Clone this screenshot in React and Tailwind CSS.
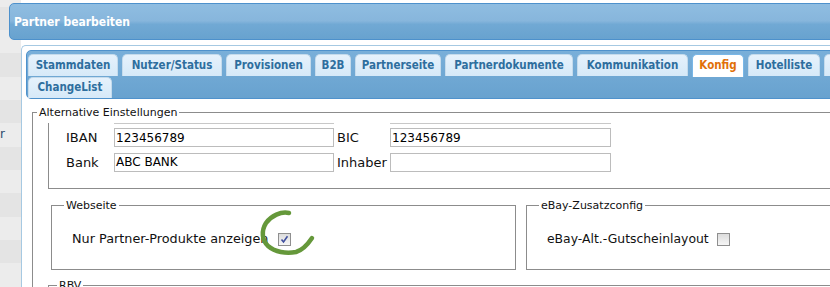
import React from "react";

const tabs = [
  { label: "Stammdaten", w: "w-[90px]" },
  { label: "Nutzer/Status", w: "w-[100px]" },
  { label: "Provisionen", w: "w-[85px]" },
  { label: "B2B", w: "w-[36px]" },
  { label: "Partnerseite", w: "w-[86px]" },
  { label: "Partnerdokumente", w: "w-[128px]" },
  { label: "Kommunikation", w: "w-[111px]" },
  { label: "Konfig", w: "w-[52px]", active: true },
  { label: "Hotelliste", w: "w-[72px]" },
  { label: "Bilder", w: "w-[70px]" },
];

const stripes = [7, 23, 23, 24, 23, 23, 24, 23, 23, 24, 23, 23, 24];

const Tab = ({ label, w, active }) => (
  <div
    className={
      active
        ? `${w} h-[23px] shrink-0 flex items-center justify-center rounded-t-[5px] border border-b-0 border-[#79b7e7] bg-white text-[#e17009]`
        : `${w} h-[22px] shrink-0 flex items-center justify-center rounded-t-[5px] border border-b-0 border-[#c5dbec] bg-[linear-gradient(#e6f2fc,#d6e9f8)] text-[#2e6e9e]`
    }
  >
    {label}
  </div>
);

const Checkbox = ({ checked }) => (
  <div className="w-[13px] h-[13px] shrink-0 border border-[#8f8f8f] bg-[linear-gradient(#dcdcdc,#f6f6f6)] flex items-center justify-center">
    {checked && (
      <svg width="9" height="9" viewBox="0 0 9 9">
        <path d="M1.5 4.5 L3.5 7 L7.5 1.2" fill="none" stroke="#3f4f9e" strokeWidth="1.6" />
      </svg>
    )}
  </div>
);

const Input = ({ value }) => (
  <div className="h-[19px] border border-[#bcbcbc] bg-white pl-px flex items-center text-[12px] text-black">
    {value}
  </div>
);

export default function App() {
  return (
    <div className="relative w-[830px] h-[287px] overflow-hidden bg-white font-['DejaVu_Sans',sans-serif]">
      {/* background behind the dialog */}
      <div className="w-[21px] flex flex-col">
        {stripes.map((h, i) => (
          <div
            key={i}
            className={`${i % 2 ? "bg-[#e4e4e4]" : "bg-[#ececec]"} ${h === 7 ? "h-[7px]" : h === 24 ? "h-[24px]" : "h-[23px]"} text-[12px] leading-[23px] text-[#2d4b6c] overflow-hidden`}
          >
            {i === 6 ? "r" : ""}
          </div>
        ))}
      </div>

      {/* dialog window */}
      <div className="absolute left-[9px] top-[3px] w-[900px]">
        <div className="h-[37px] rounded-[5px] border border-[#4d91cc] bg-[linear-gradient(#8fbde1_0%,#87b6dc_48%,#71a9d4_58%,#68a2cf_100%)] pl-[4px] flex items-center text-white font-bold text-[12px] font-stretch-condensed font-['DejaVu_Sans_Condensed','DejaVu_Sans',sans-serif]">
          Partner bearbeiten
        </div>

        <div className="ml-[12px] bg-white pt-[5px]">
          <div className="h-[260px] rounded-tl-[5px] border-l border-t border-[#a6c9e2] p-[4px] pr-0">
            {/* tab bar */}
            <div className="rounded-[5px] border border-[#4f92cc] bg-[linear-gradient(#79afd9,#68a2cf)] pl-[1px] pt-[3px] text-[11.5px] font-bold font-stretch-condensed font-['DejaVu_Sans_Condensed','DejaVu_Sans',sans-serif]">
              <div className="flex items-start gap-[4px] h-[23px]">
                {tabs.map((t) => (
                  <Tab key={t.label} {...t} />
                ))}
              </div>
              <div className="flex">
                <div className="w-[84px] h-[21px] flex items-center justify-center rounded-t-[5px] border border-b-0 border-[#c5dbec] bg-[linear-gradient(#e6f2fc,#d6e9f8)] text-[#2e6e9e]">
                  ChangeList
                </div>
              </div>
            </div>

            {/* Alternative Einstellungen */}
            <fieldset className="ml-[6px] mt-[7px] w-[900px] h-[300px] border border-[#8c8c8c] pl-[4px]">
              <legend className="px-[2px] text-[11px] leading-[13px] text-[#111]">Alternative Einstellungen</legend>

              <div className="ml-[11px] mt-[4px] border-l border-b border-[#8c8c8c] pl-[17px] pb-[16px]">
                <div className="grid grid-cols-[48px_220px_56px_221px]">
                  <div />
                  <div className="h-px bg-[#c8c8c8]" />
                  <div />
                  <div className="h-px bg-[#c8c8c8]" />
                </div>
                <div className="mt-[4px] grid grid-cols-[48px_220px_56px_221px] gap-y-[5px] items-center text-[13px] text-[#111]">
                  <div>IBAN</div>
                  <Input value="123456789" />
                  <div className="pl-[3px]">BIC</div>
                  <Input value="123456789" />
                  <div>Bank</div>
                  <Input value="ABC BANK" />
                  <div className="pl-[3px]">Inhaber</div>
                  <Input value="" />
                </div>
              </div>

              <div className="flex mt-[10px]">
                <fieldset className="ml-[14px] w-[465px] border border-[#8c8c8c] pl-[12px] pb-[22px]">
                  <legend className="px-[2px] text-[11px] leading-[13px] text-[#111]">Webseite</legend>
                  <div className="ml-[8px] mt-[19px] flex items-center gap-[10px] text-[12.8px] leading-[16px] text-[#111]">
                    <span>Nur Partner-Produkte anzeigen</span>
                    <Checkbox checked />
                  </div>
                </fieldset>
                <fieldset className="ml-[10px] w-[400px] border border-[#8c8c8c] pl-[12px] pb-[22px]">
                  <legend className="px-[2px] text-[11px] leading-[13px] text-[#111]">eBay-Zusatzconfig</legend>
                  <div className="ml-[8px] mt-[19px] flex items-center gap-[8px] text-[12.4px] leading-[16px] text-[#111]">
                    <span>eBay-Alt.-Gutscheinlayout</span>
                    <Checkbox />
                  </div>
                </fieldset>
              </div>

              <fieldset className="ml-[11px] mt-[9px] w-[860px] h-[60px] border border-[#8c8c8c] pl-[8px]">
                <legend className="px-[2px] text-[11px] leading-[13px] text-[#111]">RBV</legend>
              </fieldset>
            </fieldset>
          </div>
        </div>
      </div>

      {/* hand-drawn annotation */}
      <svg className="absolute left-0 top-0 pointer-events-none" width="830" height="287" viewBox="0 0 830 287">
        <path
          d="M289 213 C281 211 271 216 266 223 C261 231 262 240 268 246 C275 252 286 254 296 252 C303 250 308 244 312 238"
          fill="none"
          stroke="#65983a"
          strokeWidth="4.5"
          strokeLinecap="round"
        />
      </svg>
    </div>
  );
}
